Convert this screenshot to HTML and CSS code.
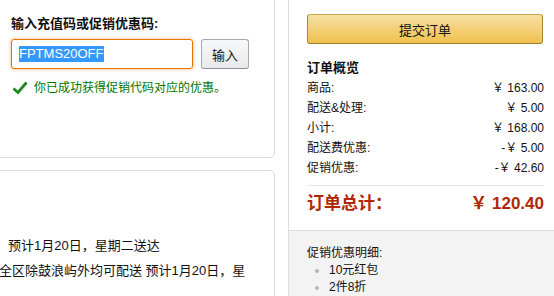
FILE: index.html
```html
<!DOCTYPE html>
<html lang="zh-CN">
<head>
<meta charset="utf-8">
<title>结算</title>
<link rel="stylesheet" href="styles.css">
</head>
<body>
<div class="page">
  <div class="left">
    <div class="card card-promo">
      <div class="promo-label">输入充值码或促销优惠码:</div>
      <div class="promo-row">
        <div class="fake-input"><span class="selected">FPTMS20OFF</span></div>
        <button class="btn-apply">输入</button>
      </div>
      <div class="success">
        <svg class="check" width="16" height="14" viewBox="0 0 16 14"><path d="M1.5 7.5 L6 11.5 L14.5 1.5" fill="none" stroke="#1e8a1e" stroke-width="2.8" stroke-linejoin="miter"/></svg>
        <span>你已成功获得促销代码对应的优惠。</span>
      </div>
    </div>
    <div class="card card-ship">
      <div class="ship-line first">预计1月20日，星期二送达</div>
      <div class="ship-line">全区除鼓浪屿外均可配送 预计1月20日，星</div>
    </div>
  </div>
  <div class="right">
    <div class="summary">
      <button class="btn-submit">提交订单</button>
      <div class="sum-title">订单概览</div>
      <div class="sum-row"><span>商品:</span><span>￥ 163.00</span></div>
      <div class="sum-row"><span>配送&amp;处理:</span><span>￥ 5.00</span></div>
      <div class="sum-row"><span>小计:</span><span>￥ 168.00</span></div>
      <div class="sum-row"><span>配送费优惠:</span><span>-￥ 5.00</span></div>
      <div class="sum-row"><span>促销优惠:</span><span>-￥ 42.60</span></div>
      <div class="sum-sep"></div>
      <div class="sum-total"><span>订单总计：</span><span>￥ 120.40</span></div>
    </div>
    <div class="promo-detail">
      <div class="pd-title">促销优惠明细:</div>
      <div class="pd-item"><span class="dot"></span><span>10元红包</span></div>
      <div class="pd-item"><span class="dot"></span><span>2件8折</span></div>
    </div>
  </div>
</div>
</body>
</html>
```

FILE: styles.css
```css
html, body {
  margin: 0;
  padding: 0;
  background: #fff;
}
body {
  width: 554px;
  height: 296px;
  overflow: hidden;
  font-family: "Liberation Sans", "Noto Sans CJK SC", sans-serif;
  font-size: 13px;
  color: #111;
}
.page {
  display: flex;
  align-items: flex-start;
  margin-top: -10px;
  margin-left: -40px;
  gap: 13px;
}
.left {
  width: 315px;
  flex: none;
  display: flex;
  flex-direction: column;
  gap: 12px;
}
.card {
  border: 1px solid #ddd;
  border-radius: 5px;
  box-sizing: border-box;
  width: 315px;
}
.card-promo {
  padding: 23px 20px 60px 50px;
}
.promo-label {
  font-weight: bold;
  line-height: 20px;
  color: #111;
}
.promo-row {
  display: flex;
  gap: 8px;
  margin-top: 5px;
}
.fake-input {
  width: 182px;
  height: 30px;
  box-sizing: border-box;
  border: 1px solid #e77600;
  border-radius: 3px;
  box-shadow: 0 0 3px 1px rgba(228, 121, 17, 0.35);
  padding: 6px 0 0 7px;
  font-size: 13px;
  line-height: 16px;
}
.selected {
  background: #3399ff;
  color: #fff;
  display: inline-block;
  height: 16px;
}
.btn-apply {
  width: 48px;
  height: 30px;
  box-sizing: border-box;
  border: 1px solid #a6a9ae;
  border-bottom-color: #8d9096;
  border-radius: 3px;
  background: linear-gradient(#f7f8fa, #e7e9ec);
  font-family: inherit;
  font-size: 13px;
  color: #111;
  padding: 0;
}
.success {
  display: flex;
  align-items: center;
  margin-top: 10px;
  line-height: 18px;
  font-size: 12px;
  color: #007600;
}
.check {
  margin: 0 6px 0 1px;
  flex: none;
}
.card-ship {
  padding: 62px 20px 40px 38px;
}
.ship-line {
  line-height: 25px;
}
.ship-line.first {
  padding-left: 9px;
}
.right {
  width: 300px;
  flex: none;
  border-left: 1px solid #ddd;
  display: flex;
  flex-direction: column;
  height: 340px;
}
.summary {
  padding: 24px 45px 14px 18px;
  display: flex;
  flex-direction: column;
}
.btn-submit {
  width: 236px;
  height: 30px;
  box-sizing: border-box;
  border: 1px solid #a88734;
  border-top-color: #c9a74c;
  border-bottom-color: #9c7e31;
  border-radius: 3px;
  background: linear-gradient(#f7dfa5, #f0c14b);
  font-family: inherit;
  font-size: 13px;
  color: #111;
  padding: 0;
}
.sum-title {
  margin-top: 14px;
  font-weight: bold;
  line-height: 20px;
}
.sum-row {
  display: flex;
  justify-content: space-between;
  font-size: 12px;
  line-height: 20px;
}
.sum-sep {
  margin-top: 7px;
  height: 1px;
  background: #e7e7e7;
}
.sum-total {
  display: flex;
  justify-content: space-between;
  margin-top: 6px;
  font-size: 17px;
  font-weight: bold;
  line-height: 24px;
  color: #b12704;
}
.promo-detail {
  flex: 1;
  border-top: 1px solid #ddd;
  background: #f3f3f3;
  padding: 14px 18px 0;
  font-size: 12px;
  line-height: 17px;
}
.pd-item {
  display: flex;
  align-items: center;
}
.dot {
  width: 4px;
  height: 4px;
  border-radius: 50%;
  background: #b5b5b5;
  margin: 0 10px 0 8px;
}
```
